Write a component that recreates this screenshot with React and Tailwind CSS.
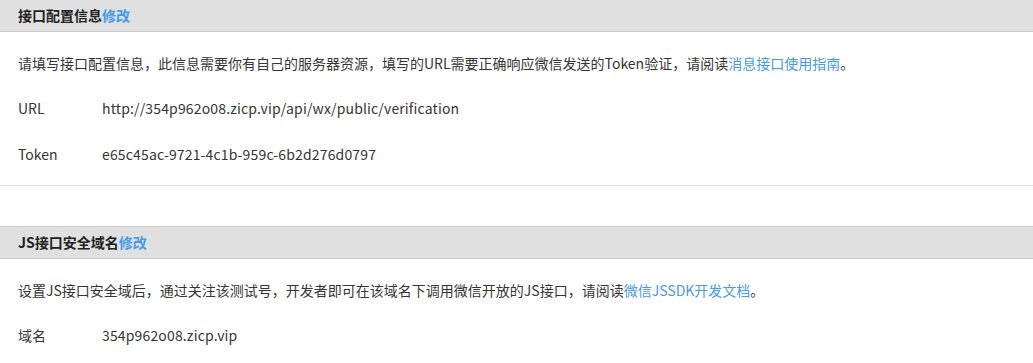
import React from 'react';

const font = {fontFamily: '"Noto Sans CJK SC", "Noto Sans", sans-serif'};

function Section({title, children, last}) {
    return (
        <div className={`border-b border-[#e0e0e0] ${last ? "" : "mb-[40px]"}`}>
            <div className="h-[33px] bg-[#e0e0e0] border-t border-b border-[#cccccc] px-[18px] flex items-center text-[14px] font-bold text-[#222]">
                {title}
                <a className="text-[#459ae9] cursor-pointer">修改</a>
            </div>
            <div className="px-[18px] pt-[19px] pb-[8px] text-[14px] text-[#353535]">
                {children}
            </div>
        </div>
    );
}

function Row({label, value}) {
    return (
        <div className="flex h-[46px] items-center">
            <span className="w-[84px]">{label}</span>
            <span className="tracking-[0.15px]">{value}</span>
        </div>
    );
}

export default function App() {
    return (
        <div className="w-[1033px] bg-white -mt-px" style={font}>
            <Section title="接口配置信息">
                <p className="h-[24px] leading-[24px]">
                    请填写接口配置信息，此信息需要你有自己的服务器资源，填写的URL需要正确响应微信发送的Token验证，请阅读
                    <a className="text-[#459ae9] cursor-pointer">消息接口使用指南</a>。
                </p>
                <div className="mt-[10px]">
                    <Row label="URL" value="http://354p962o08.zicp.vip/api/wx/public/verification"/>
                    <Row label="Token" value="e65c45ac-9721-4c1b-959c-6b2d276d0797"/>
                </div>
            </Section>
            <Section title="JS接口安全域名" last>
                <p className="h-[24px] leading-[24px]">
                    设置JS接口安全域后，通过关注该测试号，开发者即可在该域名下调用微信开放的JS接口，请阅读
                    <a className="text-[#459ae9] cursor-pointer">微信JSSDK开发文档</a>。
                </p>
                <div className="mt-[10px]">
                    <Row label="域名" value="354p962o08.zicp.vip"/>
                </div>
            </Section>
        </div>
    );
}
